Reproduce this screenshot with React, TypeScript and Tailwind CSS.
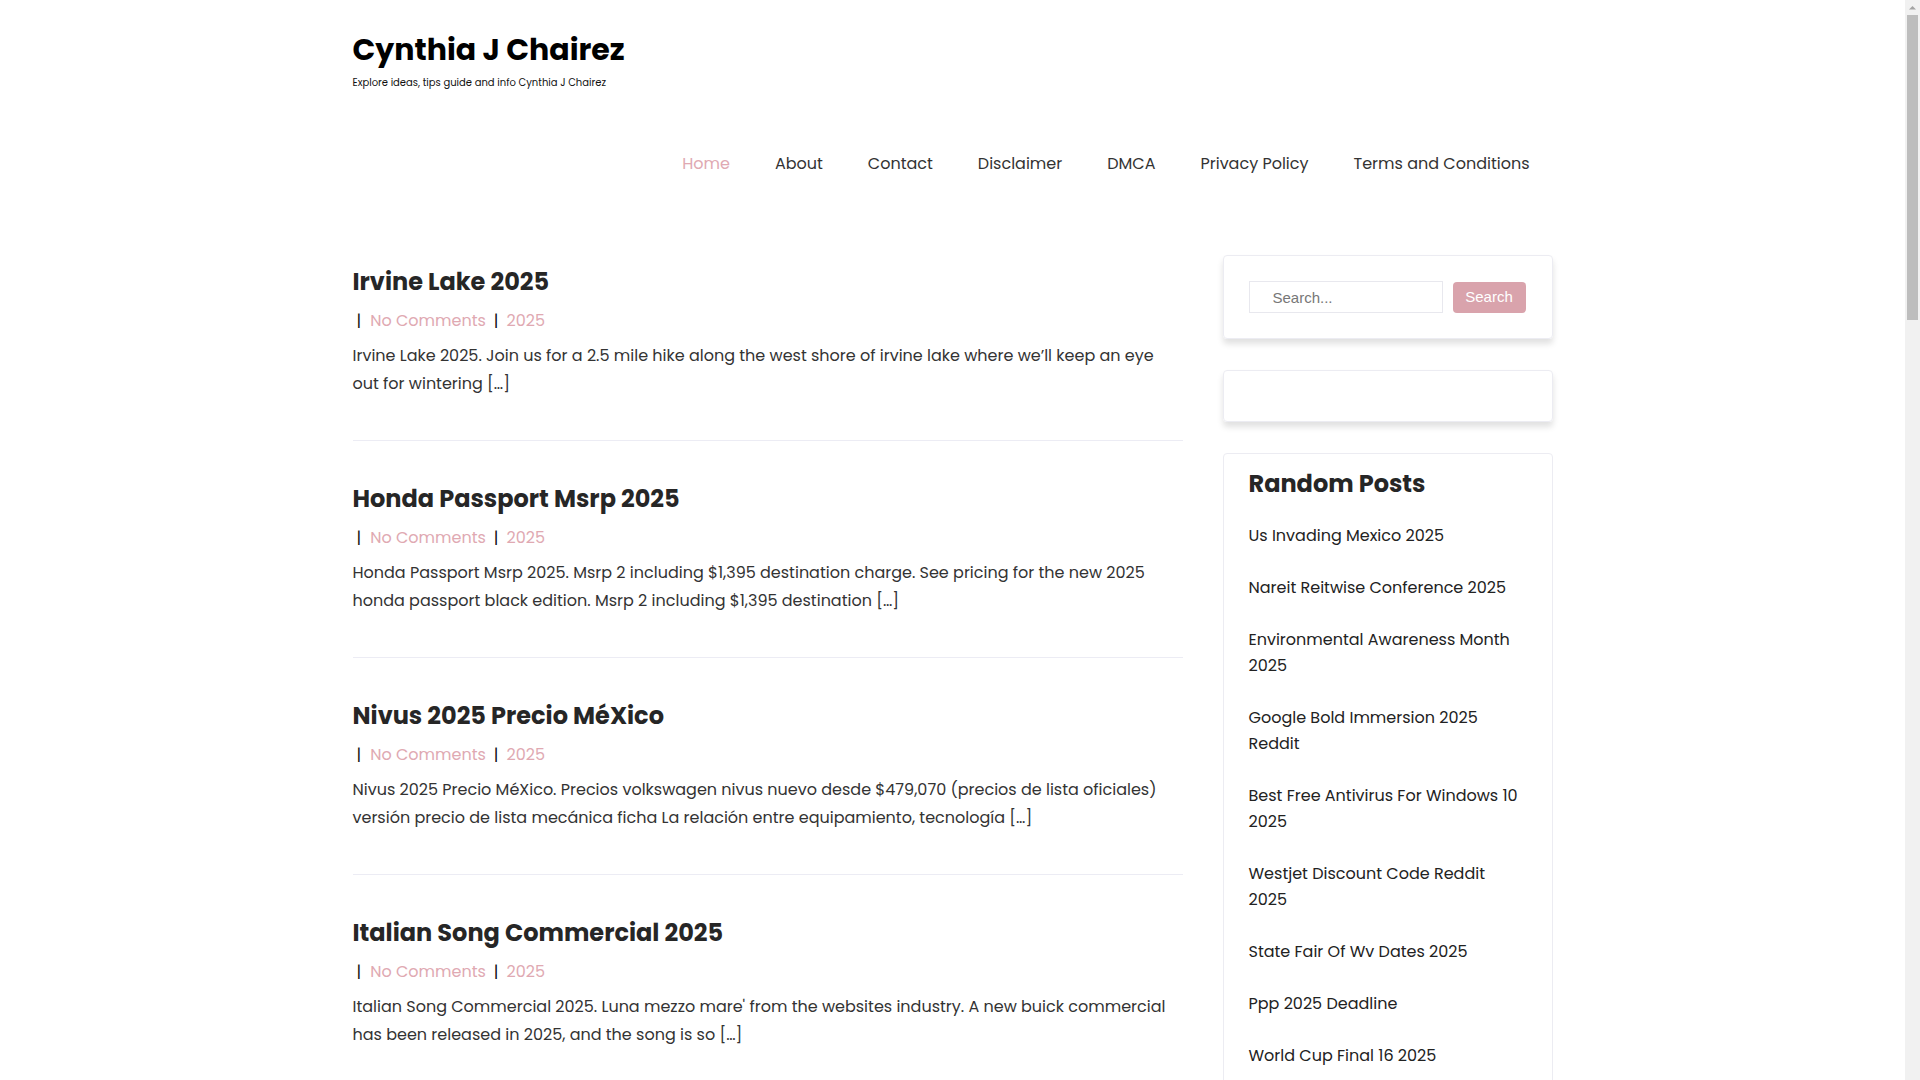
import React from "react";

const posts = [
  {
    title: "Irvine Lake 2025",
    excerpt:
      "Irvine Lake 2025. Join us for a 2.5 mile hike along the west shore of irvine lake where we\u2019ll keep an eye out for wintering [\u2026]",
  },
  {
    title: "Honda Passport Msrp 2025",
    excerpt:
      "Honda Passport Msrp 2025. Msrp 2 including $1,395 destination charge. See pricing for the new 2025 honda passport black edition. Msrp 2 including $1,395 destination [\u2026]",
  },
  {
    title: "Nivus 2025 Precio M\u00e9Xico",
    excerpt:
      "Nivus 2025 Precio M\u00e9Xico. Precios volkswagen nivus nuevo desde $479,070 (precios de lista oficiales) versi\u00f3n precio de lista mec\u00e1nica ficha La relaci\u00f3n entre equipamiento, tecnolog\u00eda [\u2026]",
  },
  {
    title: "Italian Song Commercial 2025",
    excerpt:
      "Italian Song Commercial 2025. Luna mezzo mare' from the websites industry. A new buick commercial has been released in 2025, and the song is so [\u2026]",
  },
  {
    title: "Best Free Antivirus For Windows 10 2025",
    excerpt:
      "Best Free Antivirus For Windows 10 2025. Compare the top picks for protecting your pc this year, from lightweight scanners to full security suites [\u2026]",
  },
];

const randomPosts = [
  "Us Invading Mexico 2025",
  "Nareit Reitwise Conference 2025",
  "Environmental Awareness Month 2025",
  "Google Bold Immersion 2025 Reddit",
  "Best Free Antivirus For Windows 10 2025",
  "Westjet Discount Code Reddit 2025",
  "State Fair Of Wv Dates 2025",
  "Ppp 2025 Deadline",
  "World Cup Final 16 2025",
  "Irvine Lake 2025",
];

const nav = ["Home", "About", "Contact", "Disclaimer", "DMCA", "Privacy Policy", "Terms and Conditions"];

function Scrollbar() {
  return (
    <div className="w-[15px] h-screen shrink-0 bg-[#f1f1f1] flex flex-col items-center">
      <svg width="15" height="15" viewBox="0 0 15 15" className="shrink-0">
        <path d="M4 9.5 L7.5 6 L11 9.5 Z" fill="#a3a3a3" />
      </svg>
      <div className="w-[11px] h-[305px] bg-[#bdbdbd]" />
    </div>
  );
}

export default function App() {
  return (
    <div className="h-screen flex bg-white font-['Poppins','Open_Sans',sans-serif] text-[#333]">
      <div className="flex-1 overflow-y-auto [scrollbar-width:none]">
        <div className="w-[1200px] mx-auto pb-[60px]">
          {/* Header */}
          <header className="pt-[28px]">
            <h1 className="text-[30px] leading-[44px] font-bold text-black">Cynthia J Chairez</h1>
            <p className="text-[10px] leading-[16px] text-[#111] mt-[3px]">
              Explore ideas, tips guide and info Cynthia J Chairez
            </p>
          </header>

          <nav className="flex justify-end gap-[1px] pr-[1px] mt-[61px]">
            {nav.map((item, i) => (
              <a
                key={item}
                href="#"
                className={
                  "px-[22px] text-[16px] leading-[24px] " +
                  (i === 0 ? "text-[#e0a9b2]" : "text-[#333]")
                }
              >
                {item}
              </a>
            ))}
          </nav>

          {/* Content */}
          <div className="grid grid-cols-[830px_330px] gap-[40px] mt-[79px]">
            <main className="pt-[9px]">
              {posts.map((post, i) => (
                <article
                  key={i}
                  className={"border-b border-[#ececf4] pb-[42px] " + (i === 0 ? "" : "pt-[40px]")}
                >
                  <h2 className="text-[24px] leading-[36px] font-bold text-[#262626]">{post.title}</h2>
                  <div className="mt-[9px] text-[16px] leading-[24px] flex items-center">
                    <span className="text-[#111] px-[4px]">|</span>
                    <a href="#" className="text-[#e0a9b2] ml-[5px]">No Comments</a>
                    <span className="text-[#111] px-[8px]">|</span>
                    <a href="#" className="text-[#e0a9b2]">2025</a>
                  </div>
                  <p className="mt-[9px] text-[16px] leading-[28px] text-[#333]">{post.excerpt}</p>
                </article>
              ))}
            </main>

            <aside className="flex flex-col gap-[31px]">
              <div className="rounded-[4px] border border-[#ececf2] shadow-[0_5px_6px_rgba(0,0,0,0.12)] px-[25px] py-[25px] flex items-center gap-[10px]">
                <input
                  type="text"
                  placeholder="Search..."
                  className="w-[194px] h-[32px] border border-[#e8e8ee] pl-[23px] text-[15px] font-['Liberation_Sans',sans-serif] placeholder:text-[#777] outline-none"
                />
                <button className="w-[73px] h-[31px] rounded-[4px] bg-[#d9a3ac] text-white text-[15px] font-['Liberation_Sans',sans-serif]">
                  Search
                </button>
              </div>

              <div className="h-[52px] rounded-[4px] border border-[#ececf2] shadow-[0_5px_6px_rgba(0,0,0,0.12)]" />

              <div className="rounded-[4px] border border-[#ececf2] px-[25px] pt-[11px] pb-[20px]">
                <h3 className="text-[24px] leading-[38px] font-bold text-[#262626]">Random Posts</h3>
                <ul className="mt-[20px] flex flex-col gap-[26px]">
                  {randomPosts.map((p) => (
                    <li key={p} className="text-[16px] leading-[26px] text-[#222]">
                      <a href="#">{p}</a>
                    </li>
                  ))}
                </ul>
              </div>
            </aside>
          </div>
        </div>
      </div>
      <Scrollbar />
    </div>
  );
}
